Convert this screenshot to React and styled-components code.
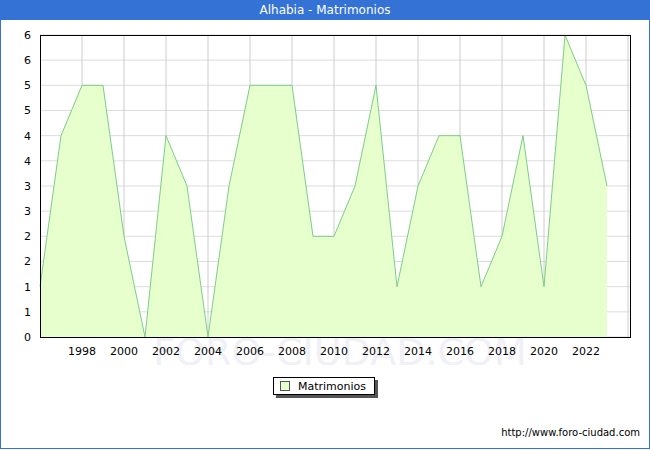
import React from "react";
import styled, { createGlobalStyle } from "styled-components";

const G = createGlobalStyle`
  html,body{margin:0;padding:0;background:#fff;}
  body{font-family:"DejaVu Sans",Verdana,sans-serif;}
`;
const Frame = styled.div`
  width:648px;height:448px;border:1px solid #3572d6;border-top:none;
  display:flex;flex-direction:column;background:#fff;
`;
const Header = styled.div`
  height:20px;margin:0 -1px;background:#3572d6;color:#fff;
  font-size:12px;display:flex;align-items:center;justify-content:center;
`;
const Chart = styled.svg`display:block;width:648px;height:345px;`;
const LegendRow = styled.div`display:flex;justify-content:center;margin-top:12px;padding-right:2px;`;
const Legend = styled.div`
  display:flex;align-items:center;gap:8px;height:16px;padding:0 8px 0 6px;
  border:1px solid #000;box-shadow:3px 3px 0 #555;font-size:11px;color:#000;background:#fff;
`;
const Swatch = styled.span`width:8px;height:8px;border:1px solid #555;background:#e6ffcc;`;
const Footer = styled.div`
  margin-top:auto;margin-bottom:10px;padding-right:9px;text-align:right;font-size:10px;color:#000;
`;

const vals=[1,4,5,5,2,0,4,3,0,3,5,5,5,2,2,3,5,1,3,4,4,1,2,4,1,6,5,3];
const X=y=>40+(y-1996)*21;
const Y=v=>337-v*50.33;
const yl=["0","1","1","2","2","3","3","4","4","5","5","6","6"];

export default function App(){
  const pts=vals.map((v,i)=>`${X(1996+i)},${Y(v)}`).join(" ");
  const area=`40,337 ${pts} ${X(2023)},337`;
  return(<><G/><Frame>
    <Header>Alhabia - Matrimonios</Header>
    <Chart viewBox="1 20 648 345">
      {yl.map((_,i)=>{const y=337-i*25.17;return <line key={"h"+i} x1="40" x2="630" y1={y} y2={y} stroke="#ddd"/>})}
      {Array.from({length:14},(_,i)=>{const x=X(1998+2*i);return x<630?<line key={"v"+i} x1={x} x2={x} y1="35" y2="337" stroke="#ccc"/>:null})}
      <text x="340" y="365" fontSize="38" fill="#f0f0f6" textAnchor="middle" fontFamily="DejaVu Sans">FORO-CIUDAD.COM</text>
      <polygon points={area} fill="#e6ffcc"/>
      <polyline points={pts} fill="none" stroke="#7ecb8a" strokeWidth="1"/>
      <rect x="40.5" y="35.5" width="590" height="302" fill="none" stroke="#000"/>
      {yl.map((t,i)=><text key={"y"+i} x="31" y={337-i*25.17+4} fontSize="11" textAnchor="end" fontFamily="DejaVu Sans">{t}</text>)}
      {Array.from({length:13},(_,i)=><text key={"x"+i} x={X(1998+2*i)} y="355" fontSize="11" textAnchor="middle" fontFamily="DejaVu Sans">{1998+2*i}</text>)}
    </Chart>
    <LegendRow><Legend><Swatch/>Matrimonios</Legend></LegendRow>
    <Footer>http://www.foro-ciudad.com</Footer>
  </Frame></>);
}
